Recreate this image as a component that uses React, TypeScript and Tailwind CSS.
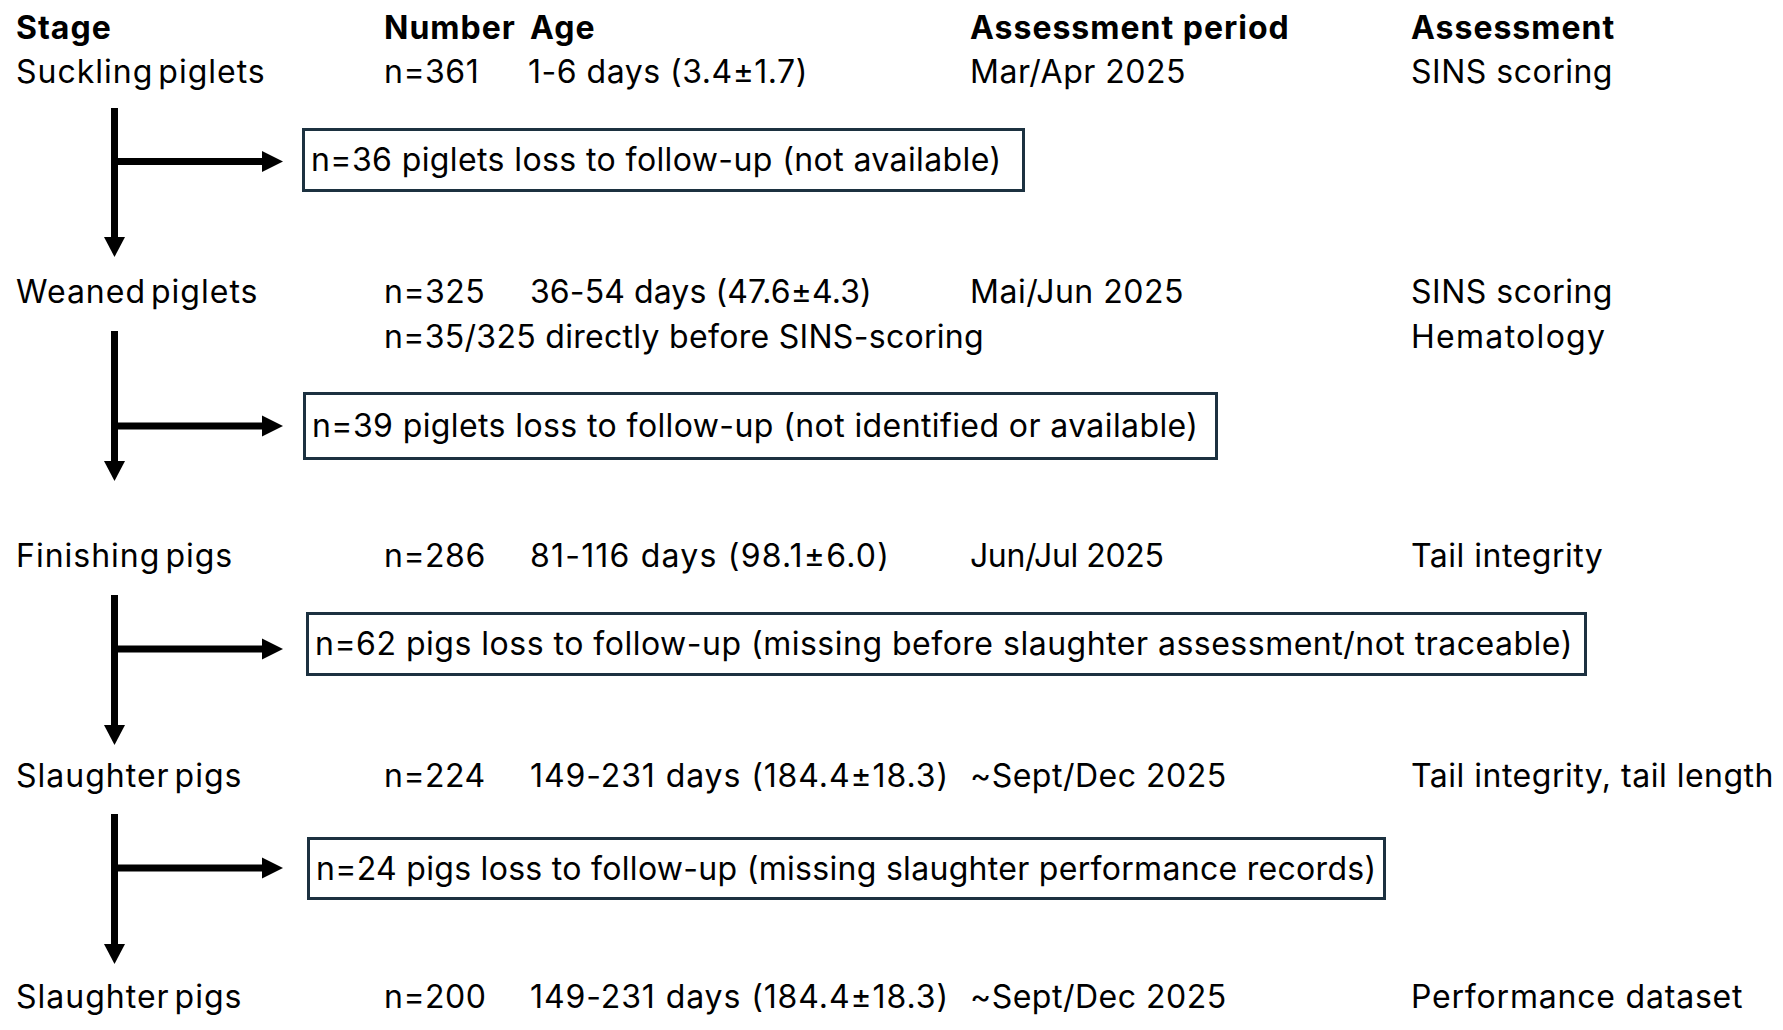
import React from "react";

function Arrow({ h, hy }: { h: number; hy: number }) {
  return (
    <svg width={179} height={h} viewBox={`0 0 179 ${h}`} className="block shrink-0">
      <rect x={7} y={0} width={7} height={h - 20} fill="#000" />
      <polygon points={`0,${h - 20} 21,${h - 20} 10.5,${h}`} fill="#000" />
      <rect x={14} y={hy - 3.5} width={144} height={7} fill="#000" />
      <polygon points={`158,${hy - 10.5} 179,${hy} 158,${hy + 10.5}`} fill="#000" />
    </svg>
  );
}

function Segment({
  className,
  arrowTop,
  arrowH,
  hy,
  boxCls,
  text,
}: {
  className: string;
  arrowTop: string;
  arrowH: number;
  hy: number;
  boxCls: string;
  text: string;
}) {
  return (
    <div className={`flex items-start pl-[104px] ${className}`}>
      <div className={arrowTop}>
        <Arrow h={arrowH} hy={hy} />
      </div>
      <div
        className={`flex items-center border-[3px] border-[#1c3140] pl-[6px] whitespace-nowrap ${boxCls}`}
      >
        {text}
      </div>
    </div>
  );
}

const rowCls =
  "grid grid-cols-[368px_146px_440px_441px_auto] h-[44px] leading-[44px] whitespace-nowrap";
const stageCls = "tracking-[1px] [word-spacing:-5px]";

export default function App() {
  return (
    <div
      className="w-[1783px] h-[1030px] bg-white text-black text-[32px] tracking-[0.5px] pl-[16px] pt-[6px] overflow-hidden"
      style={{ fontFamily: "Inter, 'Open Sans', sans-serif" }}
    >
      <div className={`${rowCls} font-bold tracking-[1px]`}>
        <div>Stage</div>
        <div>Number</div>
        <div>Age</div>
        <div>Assessment period</div>
        <div>Assessment</div>
      </div>
      <div className={rowCls}>
        <div className={stageCls}>Suckling piglets</div>
        <div>n=361</div>
        <div className="-ml-[2px]">1-6 days (3.4±1.7)</div>
        <div>Mar/Apr 2025</div>
        <div>SINS scoring</div>
      </div>

      <Segment
        className="-ml-[16px] h-[176px]"
        arrowTop="mt-[14px]"
        arrowH={149}
        hy={53.5}
        boxCls="ml-[19px] mt-[34px] w-[723px] h-[64px] tracking-[0.4px]"
        text="n=36 piglets loss to follow-up (not available)"
      />

      <div className={rowCls}>
        <div className={stageCls}>Weaned piglets</div>
        <div>n=325</div>
        <div className="tracking-[0.1px]">36-54 days (47.6±4.3)</div>
        <div>Mai/Jun 2025</div>
        <div>SINS scoring</div>
      </div>
      <div className={`${rowCls} mt-[1px]`}>
        <div></div>
        <div className="col-span-3 tracking-[0.3px]">n=35/325 directly before SINS-scoring</div>
        <div className="tracking-[1.3px]">Hematology</div>
      </div>

      <Segment
        className="-ml-[16px] -mt-[28px] h-[203px]"
        arrowTop="mt-0"
        arrowH={150}
        hy={95}
        boxCls="ml-[20px] mt-[61px] w-[915px] h-[68px] tracking-[0.4px]"
        text="n=39 piglets loss to follow-up (not identified or available)"
      />

      <div className={rowCls}>
        <div className={stageCls}>Finishing pigs</div>
        <div>n=286</div>
        <div className="tracking-[1.2px]">81-116 days (98.1±6.0)</div>
        <div className="tracking-[-0.4px]">Jun/Jul 2025</div>
        <div>Tail integrity</div>
      </div>

      <Segment
        className="-ml-[16px] h-[176px]"
        arrowTop="mt-[17px]"
        arrowH={150}
        hy={54}
        boxCls="ml-[23px] mt-[34px] w-[1281px] h-[64px] tracking-[0.5px]"
        text="n=62 pigs loss to follow-up (missing before slaughter assessment/not traceable)"
      />

      <div className={rowCls}>
        <div className={stageCls}>Slaughter pigs</div>
        <div>n=224</div>
        <div className="tracking-[0.9px]">149-231 days (184.4±18.3)</div>
        <div>~Sept/Dec 2025</div>
        <div>Tail integrity, tail length</div>
      </div>

      <Segment
        className="-ml-[16px] h-[177px]"
        arrowTop="mt-[16px]"
        arrowH={150}
        hy={54}
        boxCls="ml-[24px] mt-[39px] w-[1079px] h-[63px] tracking-[0.3px]"
        text="n=24 pigs loss to follow-up (missing slaughter performance records)"
      />

      <div className={rowCls}>
        <div className={stageCls}>Slaughter pigs</div>
        <div>n=200</div>
        <div className="tracking-[0.9px]">149-231 days (184.4±18.3)</div>
        <div>~Sept/Dec 2025</div>
        <div className="tracking-[0.8px]">Performance dataset</div>
      </div>
    </div>
  );
}
